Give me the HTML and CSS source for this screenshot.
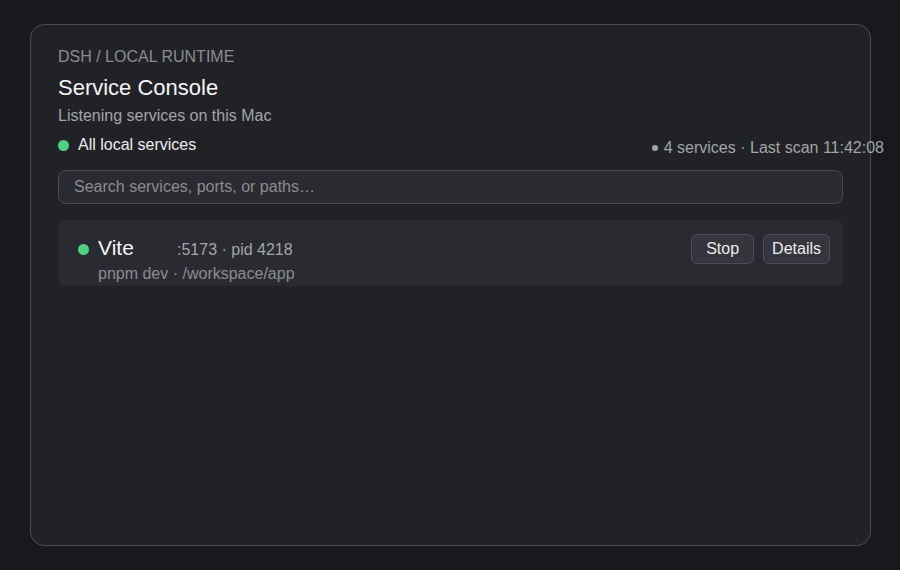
FILE: index.html
```html
<!DOCTYPE html>
<html lang="en">
<head>
  <meta charset="UTF-8">
  <meta name="viewport" content="width=device-width, initial-scale=1.0">
  <title>Service Console</title>
  <link rel="stylesheet" href="styles.css">
</head>
<body>
  <div class="panel">
    <div class="eyebrow">DSH / LOCAL RUNTIME</div>
    <h1 class="title">Service Console</h1>
    <p class="subtitle">Listening services on this Mac</p>
    <div class="status-row">
      <div class="filter"><span class="dot"></span>All local services</div>
      <div class="meta"><span class="meta-dot"></span>4 services · Last scan 11:42:08</div>
    </div>
    <input class="search" type="text" placeholder="Search services, ports, or paths…">
    <div class="service">
      <span class="dot service-dot"></span>
      <div class="service-info">
        <div class="service-top">
          <span class="service-name">Vite</span>
          <span class="service-port">:5173 · pid 4218</span>
        </div>
        <div class="service-cmd">pnpm dev · /workspace/app</div>
      </div>
      <div class="actions">
        <button class="btn">Stop</button>
        <button class="btn">Details</button>
      </div>
    </div>
  </div>
</body>
</html>
```

FILE: styles.css
```css
html, body {
  height: 100%;
}
body {
  font-family: "Liberation Sans", Arial, sans-serif;
  background-color: #18191d;
  color: #e8e8ea;
  margin: 0;
  padding: 24px 29px 24px 30px;
  box-sizing: border-box;
}
.panel {
  height: 100%;
  box-sizing: border-box;
  background: #212226;
  border: 1px solid #4a4b50;
  border-radius: 14px;
  padding: 23px 27px 0 27px;
}
.eyebrow {
  font-size: 16px;
  line-height: 18px;
  color: #8b8c91;
}
.title {
  font-size: 22px;
  font-weight: normal;
  line-height: 25px;
  color: #f4f4f5;
  margin: 9px 0 0;
}
.subtitle {
  font-size: 16px;
  line-height: 18px;
  color: #a3a4a9;
  margin: 7px 0 0;
}
.status-row {
  display: flex;
  justify-content: space-between;
  align-items: flex-start;
  margin-top: 11px;
  margin-right: -41px;
}
.filter {
  display: flex;
  align-items: center;
  font-size: 16px;
  line-height: 18px;
  color: #ececee;
}
.dot {
  width: 11px;
  height: 11px;
  border-radius: 50%;
  background: #4fd27f;
  margin-right: 9px;
  flex-shrink: 0;
}
.meta {
  display: flex;
  align-items: center;
  margin-top: 3px;
  font-size: 16px;
  line-height: 18px;
  color: #a3a4a9;
}
.meta-dot {
  width: 6px;
  height: 6px;
  border-radius: 50%;
  background: #a3a4a9;
  margin-right: 6px;
}
.search {
  display: block;
  width: 100%;
  box-sizing: border-box;
  height: 34px;
  margin-top: 13px;
  padding: 0 15px;
  background: #2a2b30;
  border: 1px solid #4a4b50;
  border-radius: 8px;
  font-family: inherit;
  font-size: 16px;
  color: #e8e8ea;
  outline: none;
}
.search::placeholder {
  color: #8b8c91;
}
.service {
  display: flex;
  align-items: flex-start;
  margin-top: 16px;
  height: 66px;
  box-sizing: border-box;
  padding: 16px 12px 0 20px;
  background: #2a2b30;
  border-radius: 8px;
}
.service-dot {
  margin-top: 8px;
}
.service-info {
  flex: 1;
}
.service-top {
  display: flex;
  align-items: baseline;
}
.service-name {
  width: 79px;
  font-size: 21px;
  line-height: 23px;
  color: #f4f4f5;
}
.service-port {
  font-size: 16px;
  color: #a3a4a9;
}
.service-cmd {
  margin-top: 6px;
  font-size: 16px;
  line-height: 18px;
  color: #8b8c91;
}
.actions {
  display: flex;
  gap: 9px;
  margin-top: -2px;
  margin-right: 1px;
}
.btn {
  height: 30px;
  min-width: 63px;
  padding: 0 8px;
  background: #35363d;
  border: 1px solid #4d4e55;
  border-radius: 6px;
  font-family: inherit;
  font-size: 16px;
  color: #ececee;
  cursor: pointer;
}
```
